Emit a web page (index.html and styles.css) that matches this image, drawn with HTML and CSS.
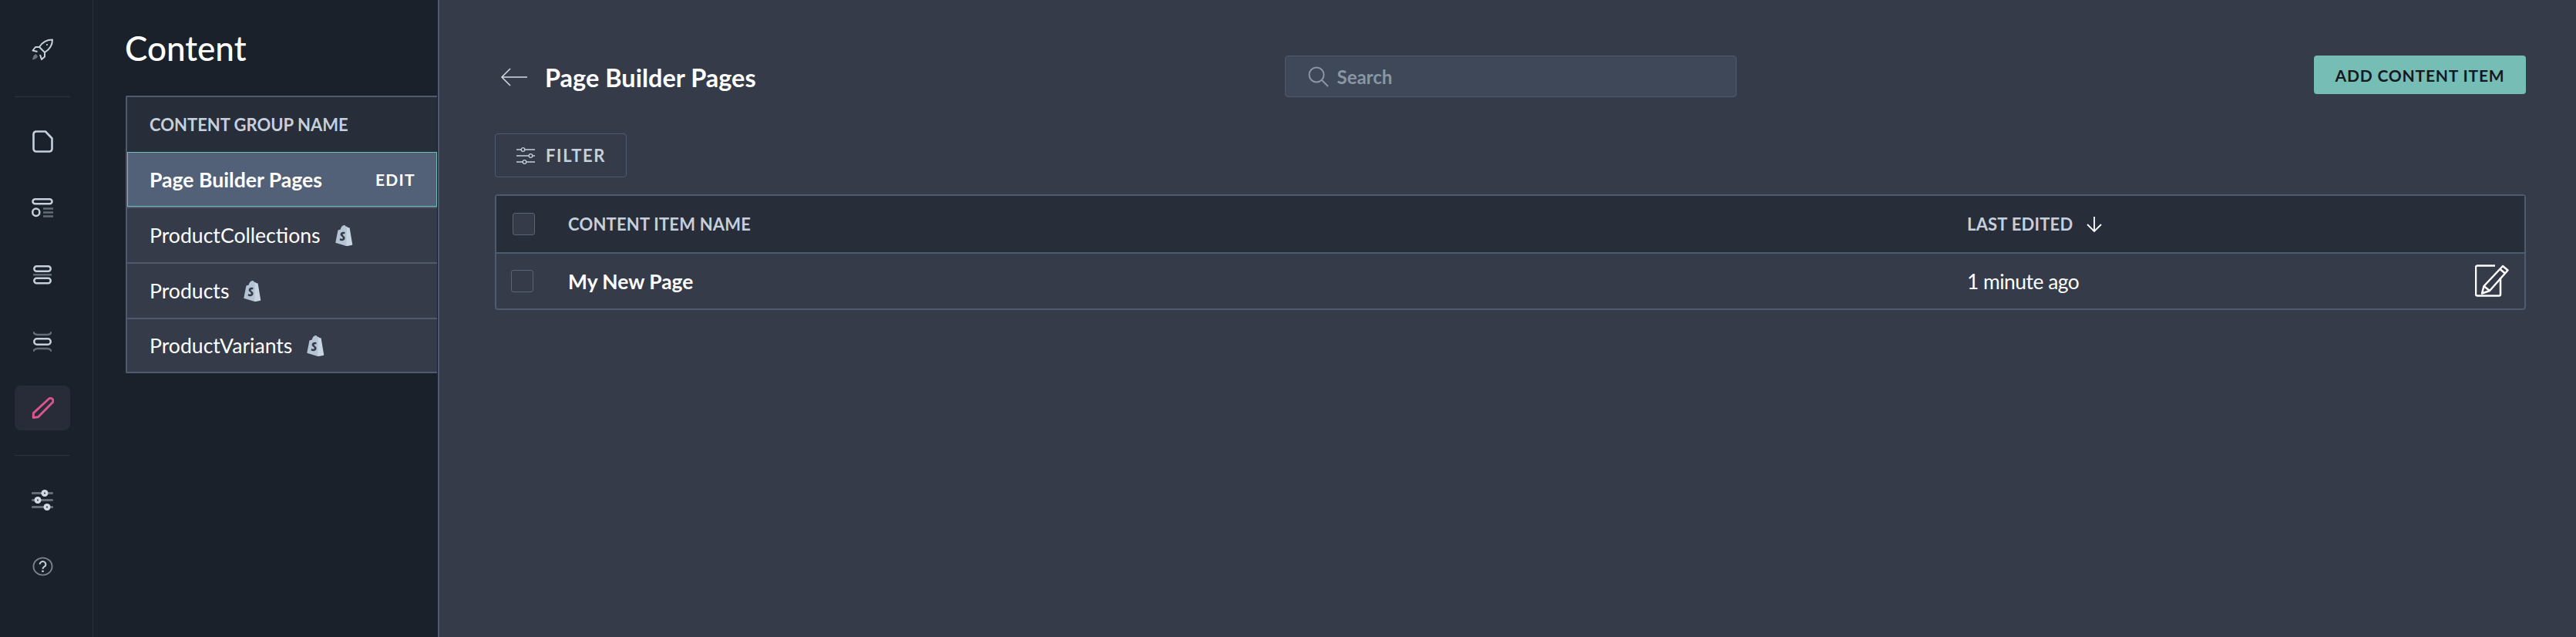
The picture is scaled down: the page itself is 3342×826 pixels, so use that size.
FILE: index.html
```html
<!DOCTYPE html>
<html lang="en">
<head>
    <meta charset="UTF-8">
    <meta name="viewport" content="width=device-width, initial-scale=1.0">
    <title>Content</title>
    <link rel="stylesheet" href="styles.css">
</head>
<body>
    <div class="app">
        <nav class="rail">
            <a class="rail-item">
                <svg width="28" height="28" viewBox="0 0 28 28" fill="none" stroke="#c5d0dc" stroke-width="2" stroke-linejoin="round">
                    <path d="M27 1.500C20 1.500 14 4.500 10 11l7 7c6.500-4 10-10 10-16.500z"/>
                    <path d="M10 11H5l-3.500 4.500L7.500 17M17 18v5.500L13 27l-2-6"/>
                    <circle cx="20" cy="8" r="1.100" fill="#c5d0dc" stroke="none"/>
                    <path d="M5.500 20C3 21 1.500 24 1 27.500c3.500-.5 6-2 7-4.500z" fill="#6b727c" stroke="none"/>
                </svg>
            </a>
            <div class="rail-divider"></div>
            <a class="rail-item">
                <svg width="27" height="29" viewBox="0 0 27 29" fill="none" stroke="#c5d0dc" stroke-width="2.6" stroke-linejoin="round">
                    <path d="M5 1.500h12l8.500 9V24a3.500 3.500 0 0 1-3.500 3.500H5A3.500 3.500 0 0 1 1.500 24V5A3.500 3.500 0 0 1 5 1.500z"/>
                </svg>
            </a>
            <a class="rail-item">
                <svg width="28" height="25" viewBox="0 0 28 25" fill="none" stroke-width="2.500">
                    <rect x="1.500" y="1.300" width="25" height="6" rx="3" stroke="#c5d0dc"/>
                    <rect x="1.300" y="13.500" width="9" height="9.500" rx="4.500" stroke="#c5d0dc"/>
                    <path d="M15 13.500h13M15 18.500h13M15 23.500h13" stroke="#646c76"/>
                </svg>
            </a>
            <a class="rail-item">
                <svg width="24" height="25" viewBox="0 0 24 25" fill="none" stroke-width="2.500">
                    <rect x="1.300" y="1.300" width="21.400" height="6.500" rx="3.200" stroke="#c5d0dc"/>
                    <rect x="1.300" y="16.700" width="21.400" height="6.500" rx="3.200" stroke="#c5d0dc"/>
                    <path d="M0 12.300h24" stroke="#646c76"/>
                </svg>
            </a>
            <a class="rail-item">
                <svg width="24" height="26" viewBox="0 0 24 26" fill="none" stroke-width="2.500">
                    <rect x="1.300" y="9.300" width="21.400" height="7.400" rx="3.500" stroke="#c5d0dc"/>
                    <path d="M0 0c1 3 3 4 6 4h12c3 0 5-1 6-4M0 26c1-3 3-4 6-4h12c3 0 5 1 6 4" stroke="#646c76"/>
                </svg>
            </a>
            <a class="rail-item active">
                <svg width="29" height="28" viewBox="0 0 29 28" fill="none" stroke="#d9558f" stroke-width="3" stroke-linejoin="round">
                    <path d="M22 2.500a3.200 3.200 0 0 1 5 4.500L8.500 25.800l-6.300.7.200-5.800z"/>
                </svg>
            </a>
            <div class="rail-divider"></div>
            <a class="rail-item">
                <svg width="28" height="27" viewBox="0 0 28 27" fill="none">
                    <path d="M1.500 4.500h25M1.500 13.500h25M1.500 22.500h25" stroke="#646c76" stroke-width="3.200" stroke-linecap="round"/>
                    <circle cx="17" cy="4.500" r="4.500" fill="#d1d9e2"/><circle cx="17" cy="4.500" r="1" fill="#1a212a"/>
                    <circle cx="8" cy="13.500" r="4.500" fill="#d1d9e2"/><circle cx="8" cy="13.500" r="1" fill="#1a212a"/>
                    <circle cx="20" cy="22.500" r="4.500" fill="#d1d9e2"/><circle cx="20" cy="22.500" r="1" fill="#1a212a"/>
                </svg>
            </a>
            <a class="rail-item">
                <svg width="27" height="25" viewBox="0 0 28 28" preserveAspectRatio="none" fill="none">
                    <circle cx="14" cy="14" r="12.500" stroke="#7c838c" stroke-width="2"/>
                    <path d="M10 11a4 4 0 1 1 6.500 3c-1.500 1.200-2.500 1.800-2.500 3.500" stroke="#c5d0dc" stroke-width="2.200"/>
                    <circle cx="14" cy="21" r="1.500" fill="#c5d0dc"/>
                </svg>
            </a>
        </nav>

        <aside class="groups">
            <h1 class="groups-title">Content</h1>
            <div class="group-list">
                <div class="group-head">CONTENT GROUP NAME</div>
                <div class="group-row selected"><span>Page Builder Pages</span><span class="group-edit">EDIT</span></div>
                <div class="group-row"><span>ProductCollections</span>
                    <svg class="bag" viewBox="0 0 22 26"><path d="M1 22 4 7c1-.3 2-.7 3-1 .6-3 2.500-5 4.500-5 1 0 1.700.6 2 1.500h1l1 1.500 1.500 0 3.500 21L14 26z" fill="#b4c4d4"/><path d="M14.500 2.500 14 26l7.500-1.500L18 4l-1.500.2z" fill="#c9d6e2"/><path d="M12.500 9.500c-3-1.200-6 .5-5.500 3 .4 1.800 3 2.200 2.800 4-.2 1.300-2 1-3.300.2L6 19c2.500 1.500 6.500.7 6.500-2.700 0-2.400-2.800-2.800-2.800-4.100 0-1 1.500-1 2.300-.5z" fill="#353b49"/></svg>
                </div>
                <div class="group-row"><span>Products</span>
                    <svg class="bag" viewBox="0 0 22 26"><path d="M1 22 4 7c1-.3 2-.7 3-1 .6-3 2.500-5 4.500-5 1 0 1.700.6 2 1.500h1l1 1.500 1.500 0 3.500 21L14 26z" fill="#b4c4d4"/><path d="M14.500 2.500 14 26l7.500-1.500L18 4l-1.500.2z" fill="#c9d6e2"/><path d="M12.500 9.500c-3-1.200-6 .5-5.500 3 .4 1.800 3 2.200 2.800 4-.2 1.300-2 1-3.300.2L6 19c2.500 1.500 6.500.7 6.500-2.700 0-2.400-2.800-2.800-2.800-4.100 0-1 1.500-1 2.300-.5z" fill="#353b49"/></svg>
                </div>
                <div class="group-row"><span>ProductVariants</span>
                    <svg class="bag" viewBox="0 0 22 26"><path d="M1 22 4 7c1-.3 2-.7 3-1 .6-3 2.500-5 4.500-5 1 0 1.700.6 2 1.500h1l1 1.500 1.500 0 3.500 21L14 26z" fill="#b4c4d4"/><path d="M14.500 2.500 14 26l7.500-1.500L18 4l-1.500.2z" fill="#c9d6e2"/><path d="M12.500 9.500c-3-1.200-6 .5-5.500 3 .4 1.800 3 2.200 2.800 4-.2 1.300-2 1-3.300.2L6 19c2.500 1.500 6.500.7 6.500-2.700 0-2.400-2.800-2.800-2.800-4.100 0-1 1.500-1 2.300-.5z" fill="#353b49"/></svg>
                </div>
            </div>
        </aside>

        <main class="main">
            <div class="topbar">
                <div class="page-heading">
                    <svg width="36" height="24" viewBox="0 0 36 24" fill="none" stroke="#d5dbe2" stroke-width="1.500"><path d="M35 12H2M13 1 2 12l11 11"/></svg>
                    <h2 class="page-title">Page Builder Pages</h2>
                </div>
                <div class="search">
                    <svg width="28" height="28" viewBox="0 0 28 28" fill="none" stroke="#8a96a4" stroke-width="2"><circle cx="12" cy="12" r="9.500"/><path d="m19 19 8 8"/></svg>
                    <span>Search</span>
                </div>
                <button class="add-btn">ADD CONTENT ITEM</button>
            </div>

            <button class="filter-btn">
                <svg width="24" height="24" viewBox="0 0 24 24" fill="none" stroke="#c5d0dc" stroke-width="1.300"><path d="M0 4h6M11 4h13M0 12h16M21 12h3M0 20h8M13 20h11"/><circle cx="8.500" cy="4" r="2.300"/><circle cx="18.500" cy="12" r="2.300"/><circle cx="10.500" cy="20" r="2.300"/></svg>
                FILTER
            </button>

            <div class="items">
                <div class="items-head">
                    <span class="check check-head"></span>
                    <span class="col-name">CONTENT ITEM NAME</span>
                    <span class="col-date">LAST EDITED
                        <svg width="22" height="22" viewBox="0 0 22 22" fill="none" stroke="#fff" stroke-width="1.800"><path d="M11 1v19M2 11l9 9 9-9"/></svg>
                    </span>
                </div>
                <div class="items-row">
                    <span class="check"></span>
                    <span class="col-name item-name">My New Page</span>
                    <span class="col-date item-date">1 minute ago</span>
                    <svg class="edit-icon" width="44" height="42" viewBox="0 0 44 42" fill="none" stroke="#fff" stroke-width="2.500" stroke-linejoin="round">
                        <path d="M26 1.500H3a2 2 0 0 0-2 2v35a2 2 0 0 0 2 2h28a2 2 0 0 0 2-2V17"/>
                        <path d="M36 2l6.500 5.500L19 34l-10 3.500 2.500-9.500z"/>
                        <path d="M32.500 6l6.500 5.500M11.500 28l7.500 6"/>
                    </svg>
                </div>
            </div>
        </main>
    </div>
</body>
</html>
```

FILE: styles.css
```css
* {
    box-sizing: border-box;
}
html, body {
    height: 100%;
}
body {
    margin: 0;
    font-family: Lato, "Open Sans", sans-serif;
    background-color: #353b49;
    color: #fff;
}
.app {
    display: flex;
    height: 826px;
    overflow: hidden;
}

/* left icon rail */
.rail {
    width: 121px;
    flex: none;
    background-color: #1a212a;
    border-right: 1px solid #2a313c;
    padding: 35px 29px 0 19px;
    display: flex;
    flex-direction: column;
    gap: 28.500px;
}
.rail-item {
    height: 58px;
    flex: none;
    display: flex;
    align-items: center;
    justify-content: center;
    border-radius: 8px;
}
.rail-item.active {
    background-color: #272c38;
}
.rail-divider {
    height: 1px;
    flex: none;
    margin-top: 3px;
    background-color: #2c333e;
}

/* content group panel */
.groups {
    width: 449px;
    flex: none;
    background-color: #1a212a;
    border-right: 2px solid #4d5a70;
    padding-left: 42px;
    padding-right: 1px;
}
.groups-title {
    margin: 0 0 0 -1px;
    height: 124px;
    padding-top: 33px;
    font-size: 44px;
    line-height: 58px;
    font-weight: 500;
}
.group-list {
    border: 2px solid #4d5a70;
    border-right: none;
    border-radius: 2px 0 0 2px;
    background-color: #353b49;
}
.group-head {
    height: 71px;
    padding-left: 29px;
    display: flex;
    align-items: center;
    background-color: #272d39;
    color: #c5d0dc;
    font-size: 22px;
    font-weight: 700;
}
.group-row {
    height: 72px;
    padding: 0 29px;
    display: flex;
    align-items: center;
    gap: 18px;
    font-size: 26.600px;
    border-top: 2px solid #4d5a70;
}
.group-row:last-child {
    height: 70px;
}
.group-row.selected {
    height: 71px;
    justify-content: space-between;
    background-color: #536178;
    font-weight: 700;
    outline: 1px solid #6fbfb4;
    outline-offset: -1px;
    border-top: none;
}
.group-edit {
    font-size: 21px;
    letter-spacing: 1.300px;
    margin-right: -1px;
}
.bag {
    width: 24px;
    height: 28px;
}

/* main area */
.main {
    flex: 1;
    padding: 72px 65px 0 72px;
}
.topbar {
    display: grid;
    grid-template-columns: 1fr 586px 1fr;
    align-items: start;
    margin-bottom: 47px;
    height: 54px;
}
.page-heading {
    display: flex;
    align-items: center;
    gap: 22px;
    height: 56px;
    padding-left: 7px;
}
.page-title {
    margin: 0;
    font-size: 32.500px;
    font-weight: 700;
}
.search {
    height: 54px;
    display: flex;
    align-items: center;
    gap: 11px;
    padding-left: 28px;
    background-color: #3e4858;
    border: 1px solid #4d5a70;
    border-radius: 4px;
    color: #8a96a4;
    font-size: 24px;
    font-weight: 700;
}
.add-btn {
    justify-self: end;
    width: 275px;
    height: 50px;
    border: none;
    border-radius: 4px;
    background-color: #75bdb5;
    color: #14191f;
    font-family: inherit;
    font-size: 21px;
    font-weight: 700;
    letter-spacing: 0.800px;
}
.filter-btn {
    width: 171px;
    height: 57px;
    display: flex;
    align-items: center;
    gap: 14px;
    padding: 0 0 0 27px;
    background: none;
    border: 1px solid #4d5a70;
    border-radius: 4px;
    color: #c5d0dc;
    font-family: inherit;
    font-size: 22px;
    font-weight: 700;
    letter-spacing: 1.600px;
}
.items {
    margin-top: 22px;
    border: 2px solid #4d5a70;
    border-radius: 4px;
}
.items-head, .items-row {
    display: flex;
    align-items: center;
    position: relative;
}
.items-head {
    height: 75px;
    background-color: #272d39;
    color: #c5d0dc;
    font-size: 22px;
    font-weight: 700;
    letter-spacing: 0.200px;
    border-bottom: 2px solid #4d5a70;
}
.items-row {
    height: 71px;
    font-size: 26.400px;
}
.check {
    width: 29px;
    height: 29px;
    flex: none;
    margin-left: 19px;
    margin-right: 45px;
    border: 1px solid #56637a;
    border-radius: 3px;
}
.check-head {
    margin-left: 21px;
    margin-right: 43px;
    background-color: #353b49;
}
.col-name {
    flex: 1;
}
.item-name {
    font-weight: 700;
}
.item-date {
    letter-spacing: -0.500px;
}
.col-date {
    width: 723px;
    display: flex;
    align-items: center;
    gap: 17px;
}
.edit-icon {
    position: absolute;
    right: 20px;
    top: 14px;
}
```
